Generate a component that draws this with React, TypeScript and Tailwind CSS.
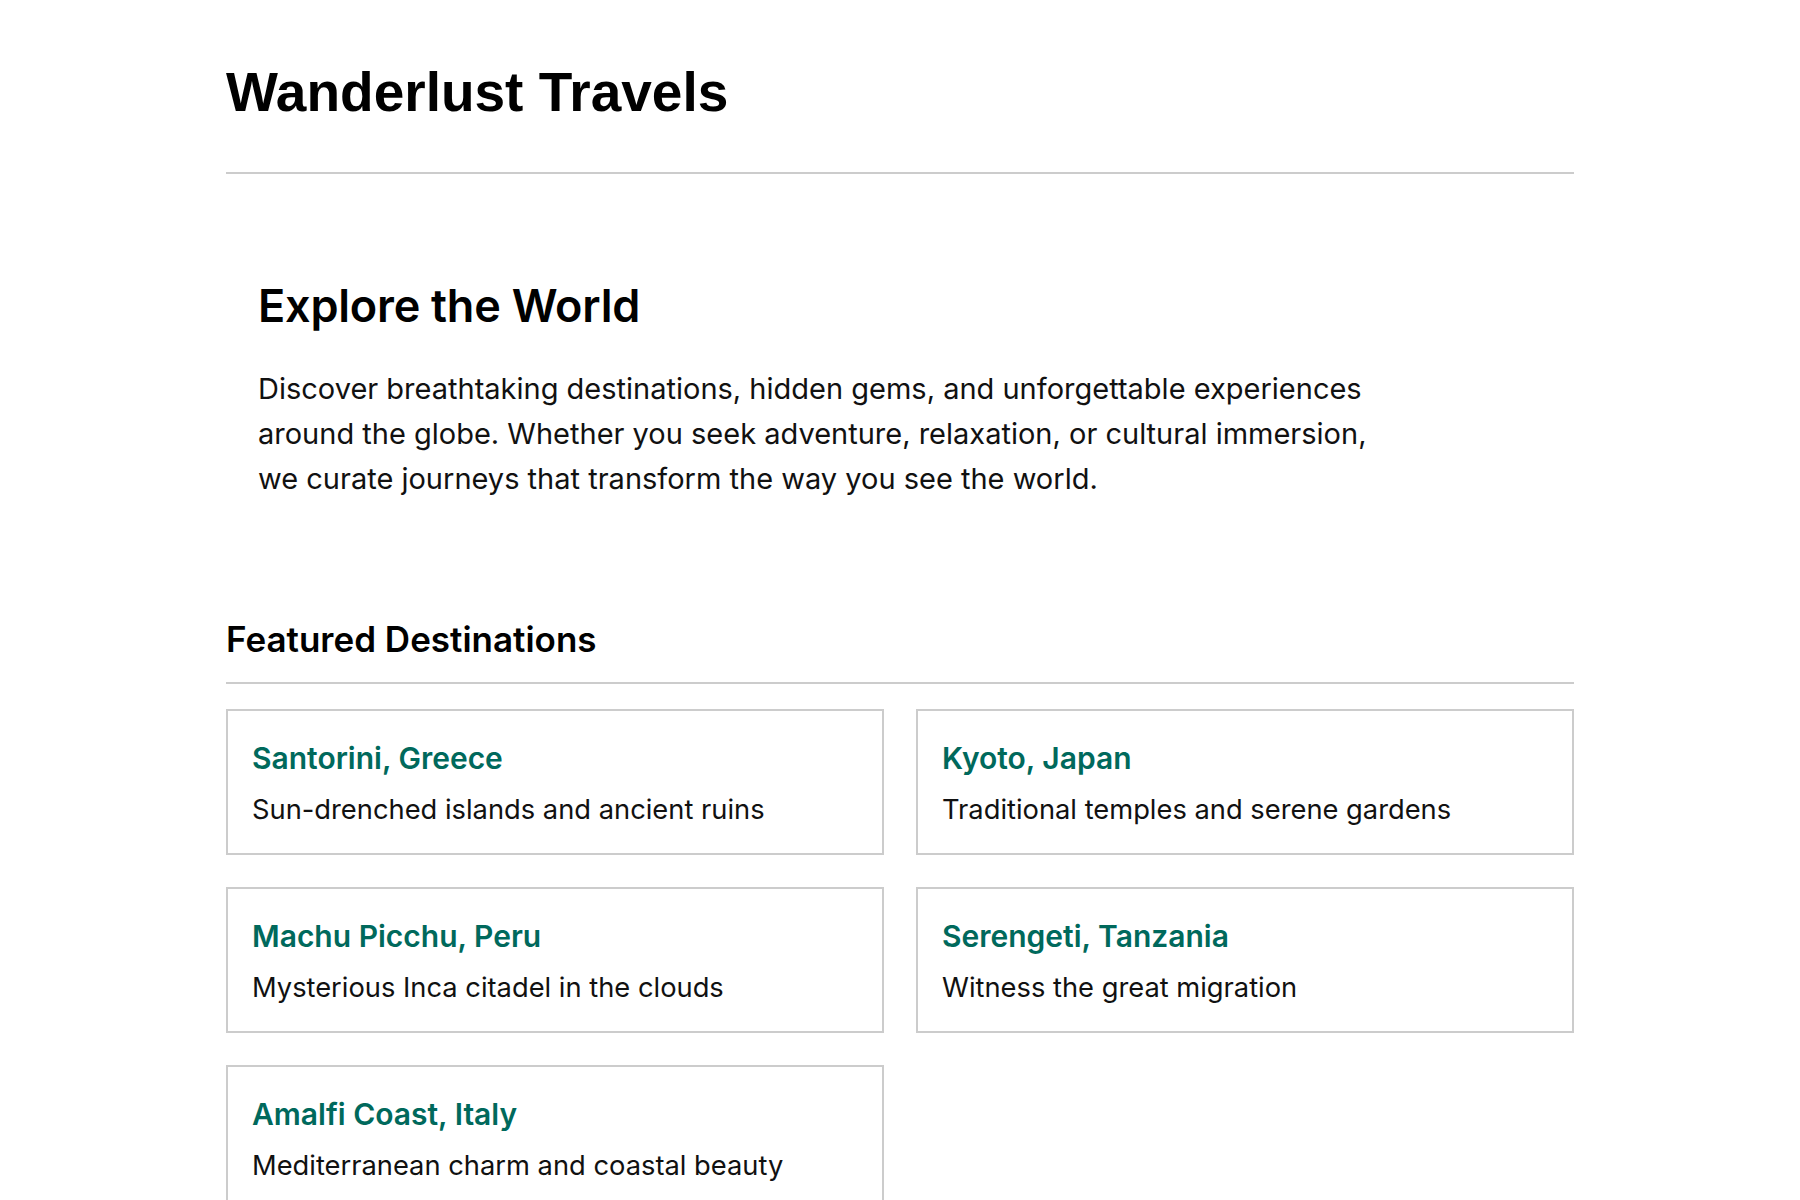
import React from "react";

interface Destination {
  name: string;
  blurb: string;
}

const destinations: Destination[] = [
  { name: "Santorini, Greece", blurb: "Sun-drenched islands and ancient ruins" },
  { name: "Kyoto, Japan", blurb: "Traditional temples and serene gardens" },
  { name: "Machu Picchu, Peru", blurb: "Mysterious Inca citadel in the clouds" },
  { name: "Serengeti, Tanzania", blurb: "Witness the great migration" },
  { name: "Amalfi Coast, Italy", blurb: "Mediterranean charm and coastal beauty" },
];

const DestinationCard: React.FC<{ dest: Destination }> = ({ dest }) => (
  <div className="border-2 border-[#cccccc] px-6 pt-[29px] pb-[22px]">
    <h3 className="text-[30px] leading-[1.2] font-semibold text-[#00695c] mb-[14px]">{dest.name}</h3>
    <p className="text-[27.3px] leading-[1.5] text-[#111111]">{dest.blurb}</p>
  </div>
);

const App: React.FC = () => {
  return (
    <div className="min-h-screen bg-white font-['Inter','Noto_Sans',sans-serif] text-black">
      <div className="max-w-[1348px] mx-auto">
        {/* Site header */}
        <header className="pt-[59px] pb-[47px] border-b-2 border-[#cccccc]">
          <h1 className="font-['Liberation_Sans','Arial',sans-serif] text-[55px] leading-[1.2] font-bold">
            Wanderlust Travels
          </h1>
        </header>

        {/* Intro */}
        <section className="px-8 pt-[105px]">
          <h2 className="text-[45px] leading-[1.2] font-semibold tracking-[-0.005em]">Explore the World</h2>
          <p className="mt-[33px] max-w-[1120px] text-[29px] leading-[45px] text-[#111111]">
            Discover breathtaking destinations, hidden gems, and unforgettable experiences around the globe. Whether
            you seek adventure, relaxation, or cultural immersion, we curate journeys that transform the way you see
            the world.
          </p>
        </section>

        {/* Featured destinations */}
        <section className="pt-[117px] pb-16">
          <h2 className="text-[35px] leading-[1.2] font-semibold pb-[22px] border-b-2 border-[#cccccc]">
            Featured Destinations
          </h2>
          <div className="mt-[25px] grid grid-cols-2 gap-8">
            {destinations.map((d) => (
              <DestinationCard key={d.name} dest={d} />
            ))}
          </div>
        </section>
      </div>
    </div>
  );
};

export default App;
